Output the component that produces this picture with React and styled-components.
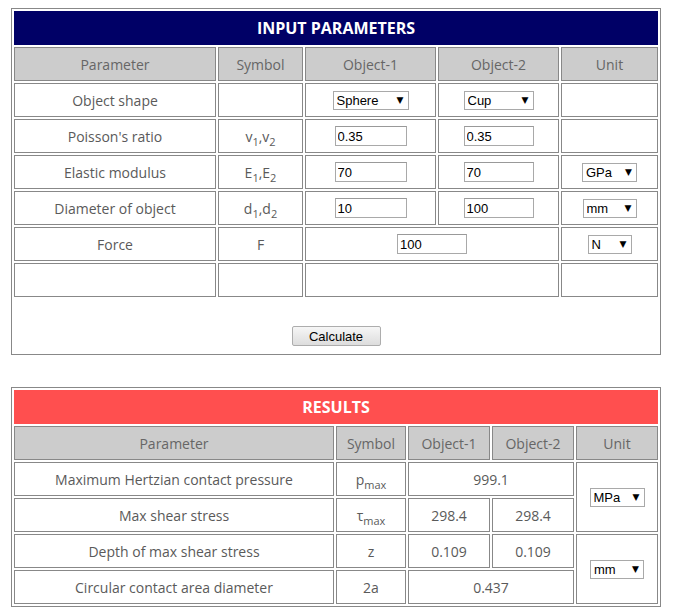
import React from "react";
import styled, { createGlobalStyle } from "styled-components";

const GlobalStyle = createGlobalStyle`
  body {
    margin: 0;
    background: #fff;
    font-family: "Open Sans", "Noto Sans", Arial, sans-serif;
  }
`;

const Page = styled.div`
  padding: 8px 0 0 11px;
`;

const Panel = styled.div`
  width: 650px;
  box-sizing: border-box;
  border: 1px solid #888;
  padding: ${(p) => (p.$footer ? "2px 2px 0" : "2px")};
  margin-bottom: 32px;
`;

const Grid = styled.div`
  display: grid;
  grid-template-columns: ${(p) => p.$cols};
  grid-auto-rows: 34px;
  gap: 2px;
`;

const Title = styled.div`
  grid-column: 1 / -1;
  background: ${(p) => p.$bg};
  color: #fff;
  font-weight: 700;
  font-size: 16px;
  display: flex;
  align-items: center;
  justify-content: center;
`;

const Box = styled.div`
  box-sizing: border-box;
  border: 1px solid #888;
  background: ${(p) => (p.$head ? "#cccccc" : "#fff")};
  color: ${(p) => (p.$head ? "#666" : "#5a5a5a")};
  font-size: 14px;
  display: flex;
  align-items: center;
  justify-content: center;
  grid-column: ${(p) => (p.$span ? `span ${p.$span}` : "auto")};
  grid-row: ${(p) => (p.$rows ? `span ${p.$rows}` : "auto")};
  white-space: nowrap;
`;

const Content = styled.span`
  display: inline-block;

  sub {
    font-size: 11px;
    vertical-align: -4px;
    line-height: 0;
  }
`;

function Cell({ children, ...rest }) {
  return (
    <Box {...rest}>
      {children != null && <Content>{children}</Content>}
    </Box>
  );
}

const Field = styled.input`
  box-sizing: border-box;
  width: ${(p) => p.$w || 70}px;
  height: 20px;
  border: 1px solid #a9a9a9;
  border-top-color: #999;
  padding: 0 2px;
  font: 13px "Liberation Sans", Arial, sans-serif;
  color: #000;
  outline: none;
  display: block;
`;

const SelectWrap = styled.span`
  position: relative;
  display: block;
`;

const Select = styled.select`
  appearance: none;
  box-sizing: border-box;
  width: ${(p) => p.$w}px;
  height: 19px;
  border: 1px solid #a9a9a9;
  border-radius: 0;
  background: #fff;
  padding: 0 14px 0 3px;
  font: 13px "Liberation Sans", Arial, sans-serif;
  color: #000;
  outline: none;
  display: block;
`;

const Arrow = styled.span`
  position: absolute;
  right: 5px;
  top: 50%;
  transform: translateY(-50%);
  font: 9px "DejaVu Sans", sans-serif;
  color: #000;
  pointer-events: none;
`;

const Footer = styled.div`
  padding: 29px 0 8px;
  display: flex;
  justify-content: center;
`;

const Button = styled.button`
  box-sizing: border-box;
  width: 89px;
  height: 20px;
  border: 1px solid #adadad;
  border-radius: 2px;
  background: linear-gradient(#f6f6f6, #dddddd);
  font: 13px "Liberation Sans", Arial, sans-serif;
  color: #000;
  padding: 0;
`;

function Dropdown({ w, value, options }) {
  return (
    <SelectWrap>
      <Select $w={w} defaultValue={value}>
        {options.map((o) => (
          <option key={o}>{o}</option>
        ))}
      </Select>
      <Arrow>▼</Arrow>
    </SelectWrap>
  );
}

const inputCols = "202px 85px 131px 121px 97px";
const resultCols = "320px 70px 82px 82px 82px";
const shapes = ["Sphere", "Cylinder", "Cup", "Flat"];

export default function App() {
  return (
    <Page>
      <GlobalStyle />
      <Panel $footer>
        <Grid $cols={inputCols}>
          <Title $bg="#000066">INPUT PARAMETERS</Title>
          <Cell $head>Parameter</Cell>
          <Cell $head>Symbol</Cell>
          <Cell $head>Object-1</Cell>
          <Cell $head>Object-2</Cell>
          <Cell $head>Unit</Cell>

          <Cell>Object shape</Cell>
          <Cell />
          <Cell>
            <Dropdown w={76} value="Sphere" options={shapes} />
          </Cell>
          <Cell>
            <Dropdown w={70} value="Cup" options={shapes} />
          </Cell>
          <Cell />

          <Cell>Poisson's ratio</Cell>
          <Cell>
            v<sub>1</sub>,v<sub>2</sub>
          </Cell>
          <Cell>
            <Field defaultValue="0.35" $w={72} />
          </Cell>
          <Cell>
            <Field defaultValue="0.35" />
          </Cell>
          <Cell />

          <Cell>Elastic modulus</Cell>
          <Cell>
            E<sub>1</sub>,E<sub>2</sub>
          </Cell>
          <Cell>
            <Field defaultValue="70" $w={72} />
          </Cell>
          <Cell>
            <Field defaultValue="70" />
          </Cell>
          <Cell>
            <Dropdown w={55} value="GPa" options={["GPa", "MPa", "psi"]} />
          </Cell>

          <Cell>Diameter of object</Cell>
          <Cell>
            d<sub>1</sub>,d<sub>2</sub>
          </Cell>
          <Cell>
            <Field defaultValue="10" $w={72} />
          </Cell>
          <Cell>
            <Field defaultValue="100" />
          </Cell>
          <Cell>
            <Dropdown w={54} value="mm" options={["mm", "cm", "m", "in"]} />
          </Cell>

          <Cell>Force</Cell>
          <Cell>F</Cell>
          <Cell $span={2}>
            <Field defaultValue="100" />
          </Cell>
          <Cell>
            <Dropdown w={44} value="N" options={["N", "kN", "lbf"]} />
          </Cell>

          <Cell />
          <Cell />
          <Cell $span={2} />
          <Cell />
        </Grid>
        <Footer>
          <Button>Calculate</Button>
        </Footer>
      </Panel>

      <Panel>
        <Grid $cols={resultCols}>
          <Title $bg="#ff4f4f">RESULTS</Title>
          <Cell $head>Parameter</Cell>
          <Cell $head>Symbol</Cell>
          <Cell $head>Object-1</Cell>
          <Cell $head>Object-2</Cell>
          <Cell $head>Unit</Cell>

          <Cell>Maximum Hertzian contact pressure</Cell>
          <Cell>
            p<sub>max</sub>
          </Cell>
          <Cell $span={2}>999.1</Cell>
          <Cell $rows={2}>
            <Dropdown w={55} value="MPa" options={["MPa", "GPa", "psi"]} />
          </Cell>

          <Cell>Max shear stress</Cell>
          <Cell>
            τ<sub>max</sub>
          </Cell>
          <Cell>298.4</Cell>
          <Cell>298.4</Cell>

          <Cell>Depth of max shear stress</Cell>
          <Cell>z</Cell>
          <Cell>0.109</Cell>
          <Cell>0.109</Cell>
          <Cell $rows={2}>
            <Dropdown w={54} value="mm" options={["mm", "µm", "in"]} />
          </Cell>

          <Cell>Circular contact area diameter</Cell>
          <Cell>2a</Cell>
          <Cell $span={2}>0.437</Cell>
        </Grid>
      </Panel>
    </Page>
  );
}
